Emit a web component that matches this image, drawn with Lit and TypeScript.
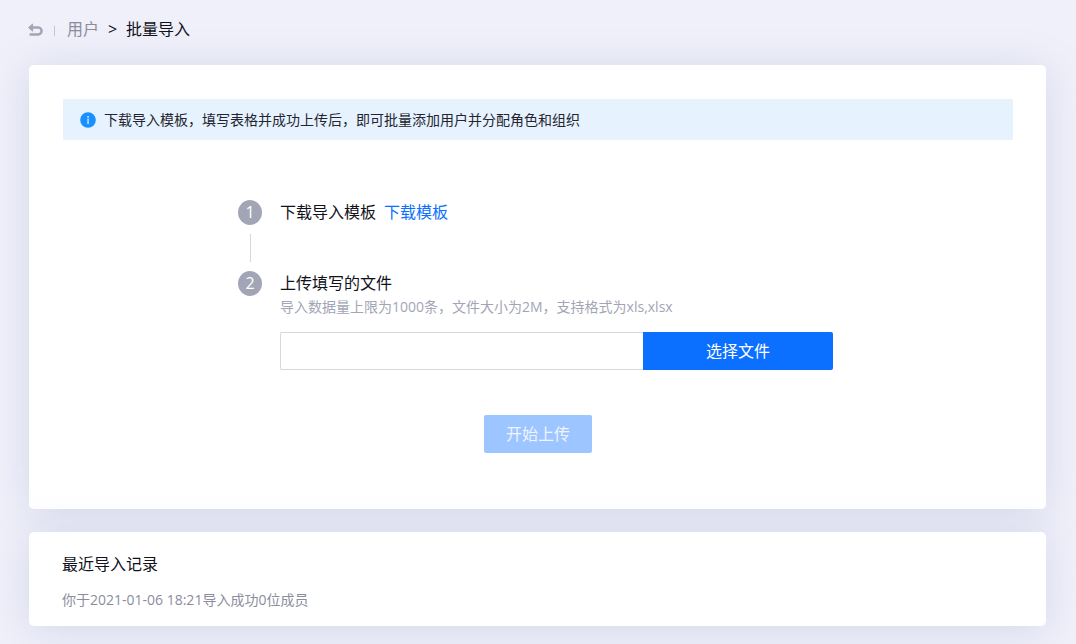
import { LitElement, html, css } from "lit";
import { customElement, property, state } from "lit/decorators.js";

@customElement("step-item")
class StepItem extends LitElement {
  @property({ type: Number }) index = 1;
  @property({ type: Boolean }) last = false;

  static styles = css`
    :host { display: flex; gap: 18px; }
    .rail { display: flex; flex-direction: column; align-items: center; gap: 9px; flex: 0 0 24px; }
    .num {
      width: 24px; height: 25px; border-radius: 50%; background: #a2a5b5; color: #fff;
      font-size: 16px; line-height: 25px; text-align: center;
    }
    .line { width: 1px; height: 28px; background: #d5d7e0; }
    .body { flex: 1; min-width: 0; }
  `;

  render() {
    return html`
      <div class="rail">
        <div class="num">${this.index}</div>
        ${this.last ? null : html`<div class="line"></div>`}
      </div>
      <div class="body"><slot></slot></div>
    `;
  }
}

@customElement("app-root")
class AppRoot extends LitElement {
  @state() fileName = "";

  static styles = css`
    * { box-sizing: border-box; }
    :host {
      display: block; min-height: 100vh; background: #f0f0fa; color: #11121a;
      font-family: "Open Sans", "Noto Sans CJK SC", sans-serif;
      font-size: 16px; line-height: 24px; box-sizing: border-box; overflow: hidden;
      padding: 17px 30px 18px 28px;
    }
    .crumbs { display: flex; align-items: center; height: 24px; margin-bottom: 24px; }
    .back { display: flex; padding: 2px 0 0; border: 0; background: none; cursor: pointer; }
    .bar { width: 1px; height: 10px; margin: 4px 12px 0 11px; background: #c3c5d0; }
    .parent { color: #8b8d9c; text-decoration: none; }
    .sep { width: 27px; text-align: center; font-size: 16px; }
    .card {
      background: #fff; border-radius: 5px; margin-left: 1px;
      box-shadow: 0 4px 40px rgba(120, 132, 182, 0.22);
    }
    .import { padding: 34px 33px 56px 34px; margin-bottom: 23px; }
    .notice {
      display: flex; align-items: center; gap: 8px; min-height: 41px; padding: 0 17px;
      background: #e7f2ff; color: #24252e; font-size: 14px;
    }
    .notice svg { flex: none; }
    .steps { display: flex; flex-direction: column; gap: 9px; max-width: 600px; margin: 60px auto 0; }
    .link { color: #0b6fff; text-decoration: none; margin-left: 8px; }
    .hint { font-size: 14px; color: #a2a5b5; }
    .picker { display: flex; max-width: 553px; margin-top: 13px; }
    .file {
      flex: 1; min-width: 0; height: 38px; padding: 0 12px; border: 1px solid #d6d8e0;
      border-right: 0; border-radius: 2px 0 0 2px; background: #fff; font: inherit; outline: none;
    }
    .btn { height: 38px; border: 0; padding: 0; background: #0b6fff; color: #fff; font: inherit; cursor: pointer; }
    .choose { width: 190px; border-radius: 0 2px 2px 0; }
    .start { display: block; width: 108px; margin: 45px auto 0; border-radius: 2px; }
    .start:disabled { background: #9dc5ff; color: #eef5ff; cursor: default; }
    .records { padding: 20px 33px 15px; }
    h2 { margin: 0 0 12px; font-size: 16px; font-weight: 400; line-height: 24px; }
    p { margin: 0; }
    .record { font-size: 14px; color: #8b8d9c; line-height: 23px; }
  `;

  render() {
    return html`
      <nav class="crumbs">
        <button class="back" aria-label="返回">
          <svg width="15" height="14" viewBox="0 0 15 14" fill="none">
            <path d="M4 4.6h6.2a3.4 3.4 0 0 1 0 6.8H2.6" stroke="#a2a5b5" stroke-width="2.5" stroke-linecap="round" />
            <path d="M.6 4.6 4.6 1v7.2z" fill="#a2a5b5" stroke="#a2a5b5" stroke-linejoin="round" />
          </svg>
        </button>
        <span class="bar"></span>
        <a class="parent" href="#">用户</a>
        <span class="sep">&gt;</span>
        <span>批量导入</span>
      </nav>

      <section class="card import">
        <div class="notice">
          <svg width="16" height="16" viewBox="0 0 16 16">
            <circle cx="8" cy="8" r="7.8" fill="#1a90ff" />
            <rect x="7.4" y="4" width="1.3" height="1.5" fill="#fff" />
            <rect x="7.5" y="6.5" width="1.1" height="5.6" fill="#fff" />
          </svg>
          <span>下载导入模板，填写表格并成功上传后，即可批量添加用户并分配角色和组织</span>
        </div>
        <div class="steps">
          <step-item index="1">
            <span>下载导入模板</span><a class="link" href="#">下载模板</a>
          </step-item>
          <step-item index="2" last>
            <label for="file">上传填写的文件</label>
            <p class="hint">导入数据量上限为1000条，文件大小为2M，支持格式为xls,xlsx</p>
            <div class="picker">
              <input id="file" class="file" type="text" readonly .value=${this.fileName} />
              <button class="btn choose">选择文件</button>
            </div>
          </step-item>
        </div>
        <button class="btn start" ?disabled=${!this.fileName}>开始上传</button>
      </section>

      <section class="card records">
        <h2>最近导入记录</h2>
        <p class="record">你于2021-01-06 18:21导入成功0位成员</p>
      </section>
    `;
  }
}
